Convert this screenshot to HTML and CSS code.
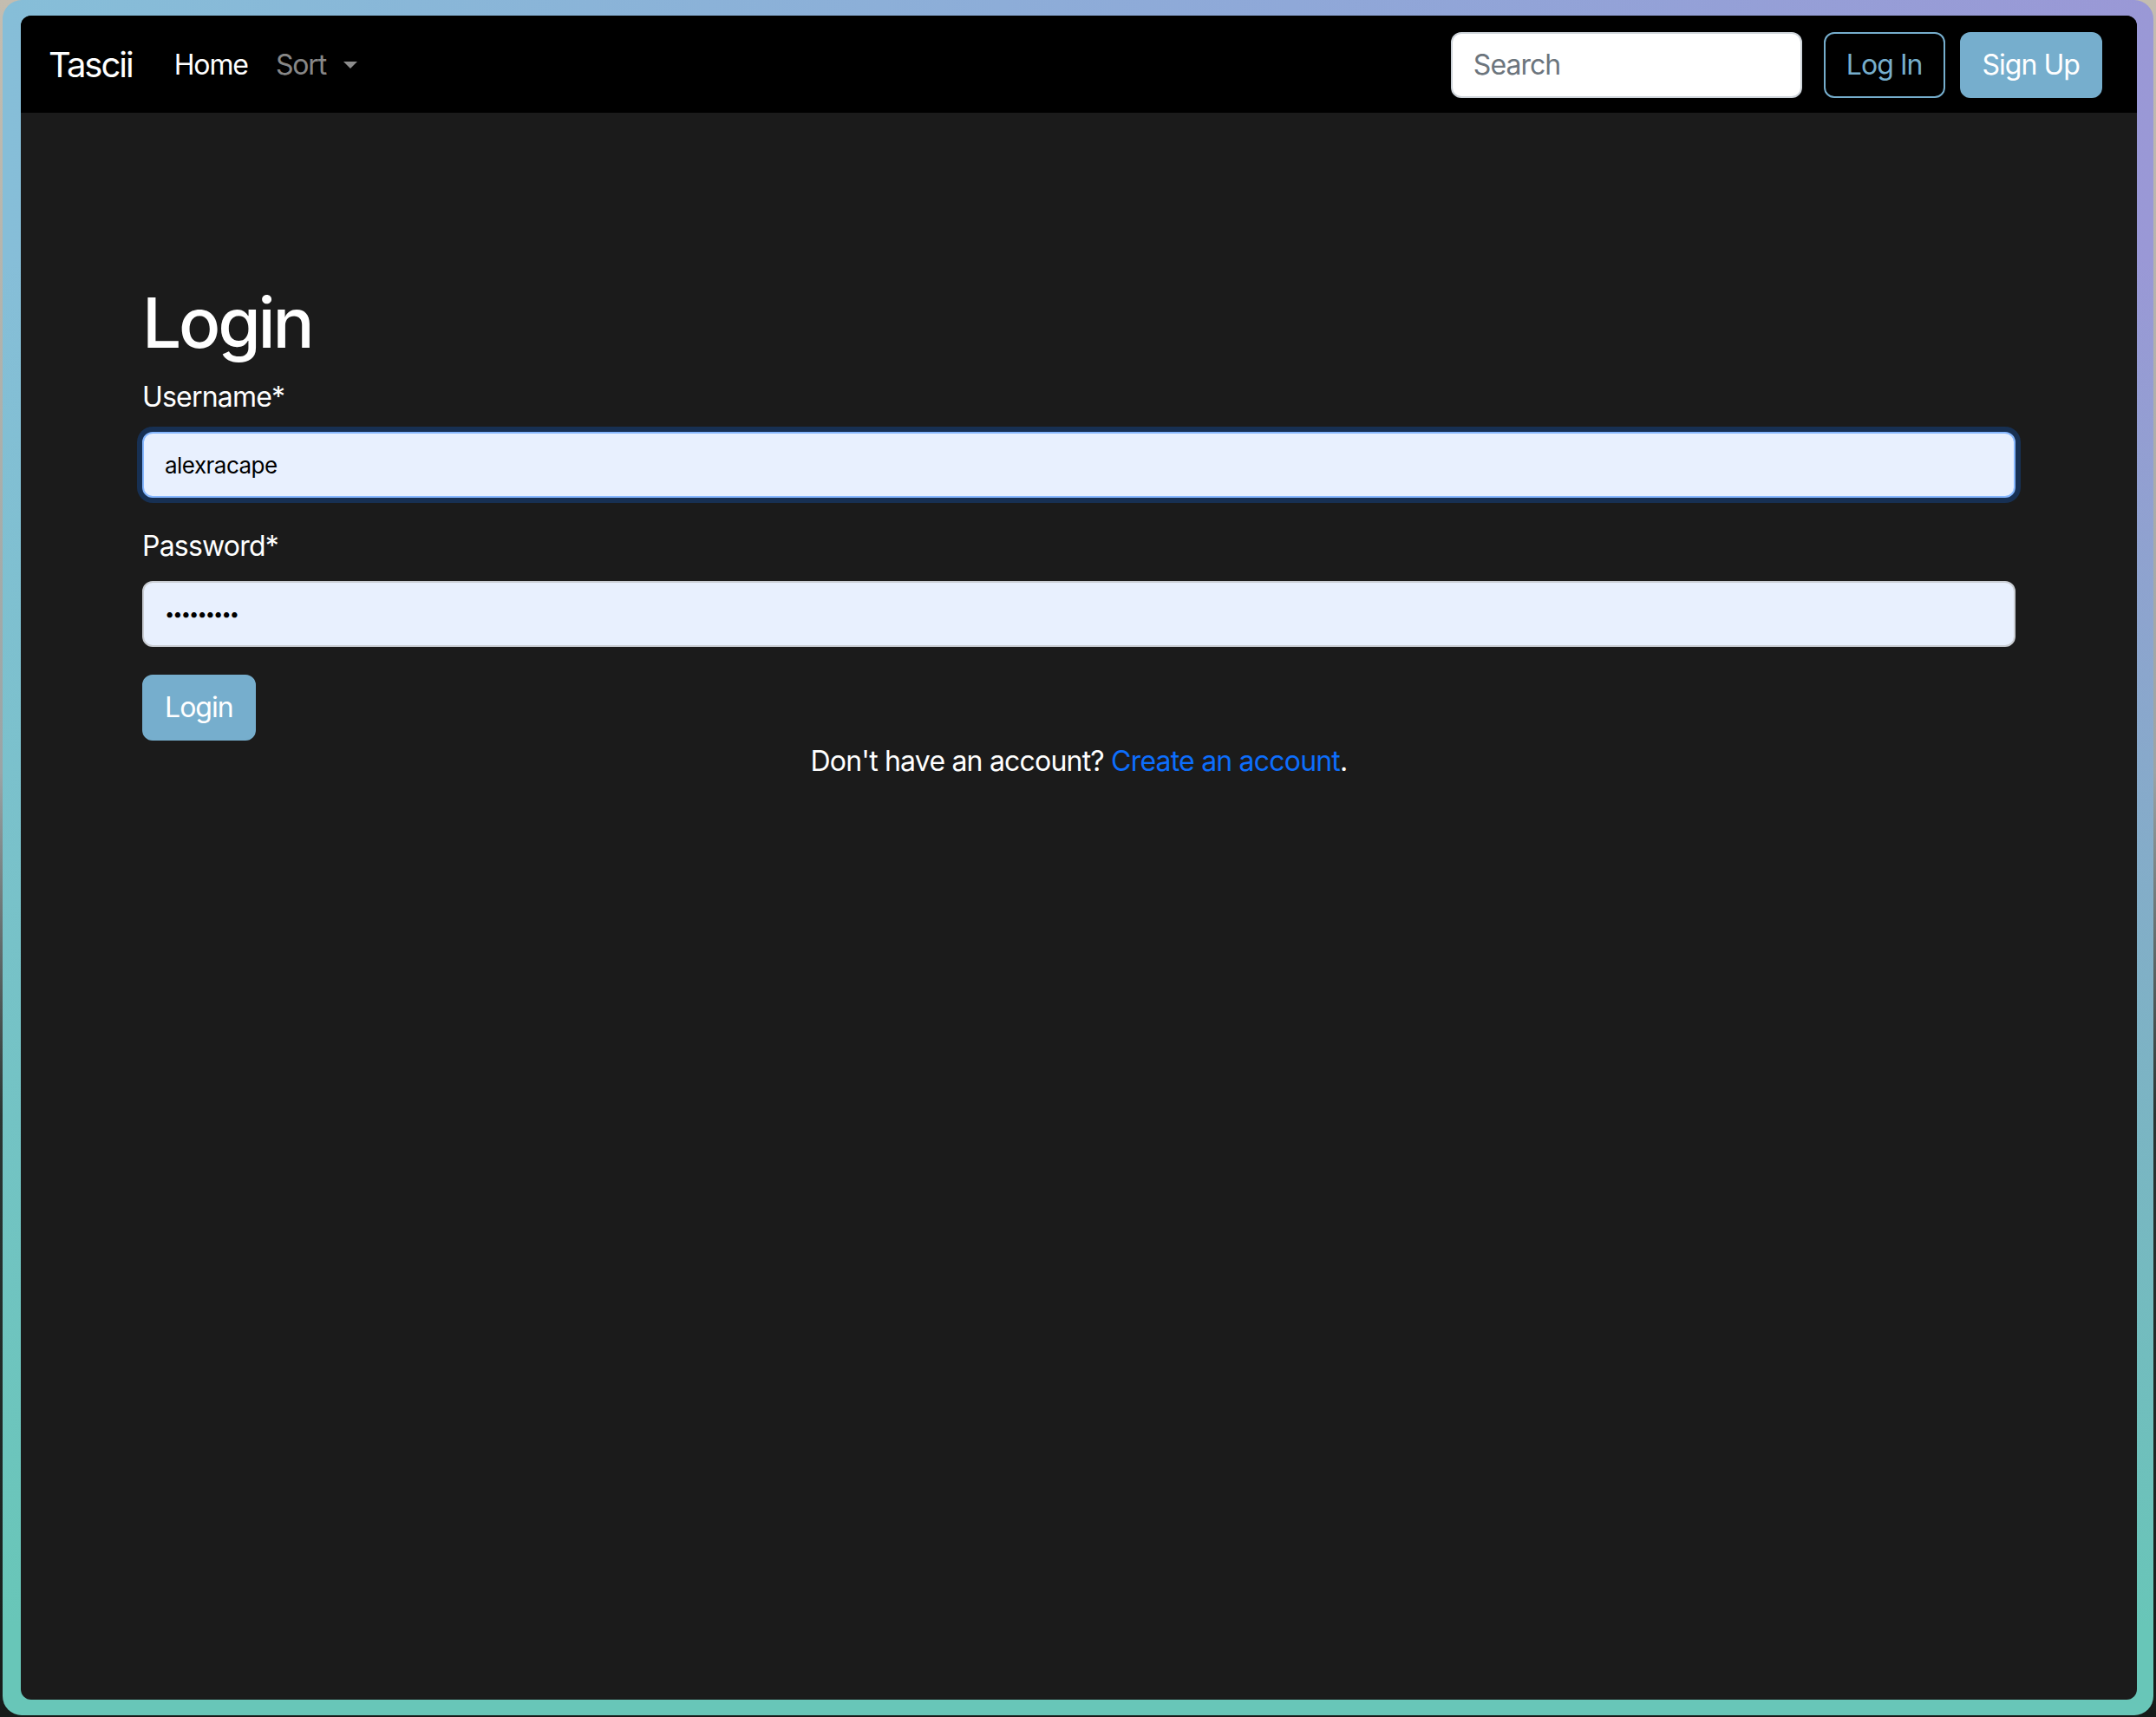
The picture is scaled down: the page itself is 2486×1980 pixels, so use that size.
FILE: index.html
```html
<!DOCTYPE html>
<html lang="en">
<head>
<meta charset="utf-8">
<title>Tascii - Login</title>
<link rel="stylesheet" href="styles.css">
</head>
<body>
<div class="frame">
  <div class="window">
    <nav class="navbar">
      <a class="brand" href="#">Tascii</a>
      <ul class="nav">
        <li><a class="nav-link" href="#">Home</a></li>
        <li><a class="nav-link muted" href="#">Sort<span class="caret"></span></a></li>
      </ul>
      <form class="nav-form">
        <input class="search" type="search" placeholder="Search">
        <button class="btn btn-outline" type="button">Log In</button>
        <button class="btn btn-fill" type="button">Sign Up</button>
      </form>
    </nav>
    <main class="content">
      <h1 class="title">Login</h1>
      <form class="login-form">
        <div class="field">
          <label class="label" for="username">Username*</label>
          <input class="input input-focus" id="username" type="text" value="alexracape">
        </div>
        <div class="field">
          <label class="label" for="password">Password*</label>
          <input class="input input-pass" id="password" type="password" value="secretpwd">
        </div>
        <button class="btn btn-fill btn-submit" type="button">Login</button>
      </form>
      <p class="signup-note">Don't have an account? <a href="#" class="link">Create an account</a>.</p>
    </main>
  </div>
</div>
</body>
</html>
```

FILE: styles.css
```css
* { box-sizing: border-box; }
html, body { margin: 0; }
body {
  width: 2486px;
  height: 1980px;
  overflow: hidden;
  background: linear-gradient(to bottom, #c4bdb0 0%, #9aa4a6 45%, #2a3432 65%, #161b19 100%);
  font-family: Inter, "Noto Sans", sans-serif;
}
.frame {
  margin: 0 3px;
  height: 1978px;
  border-radius: 22px;
  padding: 18px 19px 18px 21px;
  background:
    linear-gradient(to bottom, rgba(104,198,184,0) 0%, rgba(104,198,184,0) 15%, rgba(104,198,184,1) 95%),
    linear-gradient(to right, #86bed8 0%, #8fa8d8 60%, #9a98d6 100%);
}
.window {
  height: 100%;
  border-radius: 12px;
  background: #1b1b1b;
  overflow: hidden;
}
.navbar {
  height: 112px;
  background: #000;
  display: flex;
  align-items: center;
  padding: 1px 40px 0 32px;
}
.brand {
  font-size: 40px;
  line-height: 60px;
  letter-spacing: -0.05em;
  color: #fff;
  text-decoration: none;
  margin-right: 32px;
}
.nav {
  display: flex;
  list-style: none;
  margin: 0;
  padding: 0;
}
.nav-link {
  display: flex;
  align-items: center;
  font-size: 32px;
  line-height: 48px;
  letter-spacing: -0.035em;
  padding: 0 16px;
  color: #fff;
  text-decoration: none;
}
.nav-link.muted { color: rgba(255,255,255,0.55); }
.caret {
  display: inline-block;
  margin-left: 20px;
  border-top: 8px solid currentColor;
  border-left: 8px solid transparent;
  border-right: 8px solid transparent;
}
.nav-form {
  margin-left: auto;
  display: flex;
  align-items: center;
}
.search {
  width: 405px;
  height: 76px;
  border: 2px solid #ced4da;
  border-radius: 12px;
  padding: 0 24px;
  font-size: 32px;
  font-family: inherit;
  letter-spacing: -0.03em;
  color: #212529;
  background: #fff;
  margin-right: 25px;
  outline: none;
}
.search::placeholder { color: #6c757d; }
.btn {
  height: 76px;
  padding: 0 24px;
  font-size: 32px;
  font-family: inherit;
  letter-spacing: -0.03em;
  border-radius: 12px;
  border: 2px solid #76aecd;
  line-height: 1;
  cursor: pointer;
}
.btn-outline {
  background: transparent;
  color: #76aecd;
  margin-right: 17px;
}
.btn-fill {
  background: #76aecd;
  color: #fff;
}
.content {
  width: 2160px;
  margin: 0 auto;
  padding-top: 194px;
  color: #fff;
}
.title {
  font-size: 80px;
  font-weight: 500;
  line-height: 96px;
  letter-spacing: -0.04em;
  margin: 0 0 14px;
}
.field { margin-bottom: 32px; }
.label {
  display: block;
  font-size: 32px;
  line-height: 48px;
  letter-spacing: -0.025em;
  margin-bottom: 16px;
}
.input {
  display: block;
  width: 100%;
  height: 76px;
  border: 2px solid #c9cdd3;
  border-radius: 12px;
  background: #e8f0fe;
  padding: 0 24px;
  font-size: 26px;
  font-family: inherit;
  letter-spacing: -0.02em;
  color: #000;
  outline: none;
}
.input-focus {
  border-color: #86b7fe;
  box-shadow: 0 0 0 6px rgba(13,110,253,0.25);
}
.input-pass {
  font-size: 20px;
  letter-spacing: -1.9px;
}
.btn-submit { display: block; }
.signup-note {
  text-align: center;
  font-size: 32px;
  line-height: 48px;
  letter-spacing: -0.025em;
  margin: 0;
}
.link {
  color: #0d6efd;
  text-decoration: none;
}
```
